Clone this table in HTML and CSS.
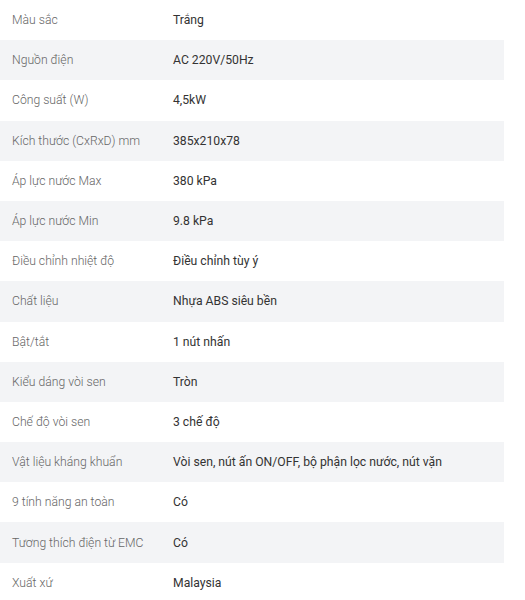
FILE: index.html
```html
<!DOCTYPE html>
<html lang="vi">
<head>
<meta charset="utf-8">
<link rel="stylesheet" href="styles.css">
</head>
<body>
<table class="specs">
<tr><td class="k">Màu sắc</td><td class="v">Trắng</td></tr>
<tr><td class="k">Nguồn điện</td><td class="v">AC 220V/50Hz</td></tr>
<tr><td class="k">Công suất (W)</td><td class="v">4,5kW</td></tr>
<tr><td class="k">Kích thước (CxRxD) mm</td><td class="v">385x210x78</td></tr>
<tr><td class="k">Áp lực nước Max</td><td class="v">380 kPa</td></tr>
<tr><td class="k">Áp lực nước Min</td><td class="v">9.8 kPa</td></tr>
<tr><td class="k">Điều chỉnh nhiệt độ</td><td class="v">Điều chỉnh tùy ý</td></tr>
<tr><td class="k">Chất liệu</td><td class="v">Nhựa ABS siêu bền</td></tr>
<tr><td class="k">Bật/tắt</td><td class="v">1 nút nhấn</td></tr>
<tr><td class="k">Kiểu dáng vòi sen</td><td class="v">Tròn</td></tr>
<tr><td class="k">Chế độ vòi sen</td><td class="v">3 chế độ</td></tr>
<tr><td class="k">Vật liệu kháng khuẩn</td><td class="v">Vòi sen, nút ấn ON/OFF, bộ phận lọc nước, nút vặn</td></tr>
<tr><td class="k">9 tính năng an toàn</td><td class="v">Có</td></tr>
<tr><td class="k">Tương thích điện từ EMC</td><td class="v">Có</td></tr>
<tr><td class="k">Xuất xứ</td><td class="v">Malaysia</td></tr>
</table>
</body>
</html>
```
FILE: styles.css
```css
html, body {
  margin: 0;
  padding: 0;
  background: #fff;
}
body {
  font-family: Roboto, "Liberation Sans", Arial, sans-serif;
  font-size: 12.2px;
}
.specs {
  width: 504px;
  border-collapse: collapse;
  border-spacing: 0;
}
.specs tr {
  height: 40.2px;
}
.specs tr:nth-child(even) {
  background: #f3f4f6;
}
.specs td {
  padding: 0;
  vertical-align: middle;
  line-height: 20px;
}
.specs .k {
  width: 161px;
  padding-left: 12px;
  color: #666;
  font-weight: 300;
}
.specs .v {
  color: #333;
}
```
